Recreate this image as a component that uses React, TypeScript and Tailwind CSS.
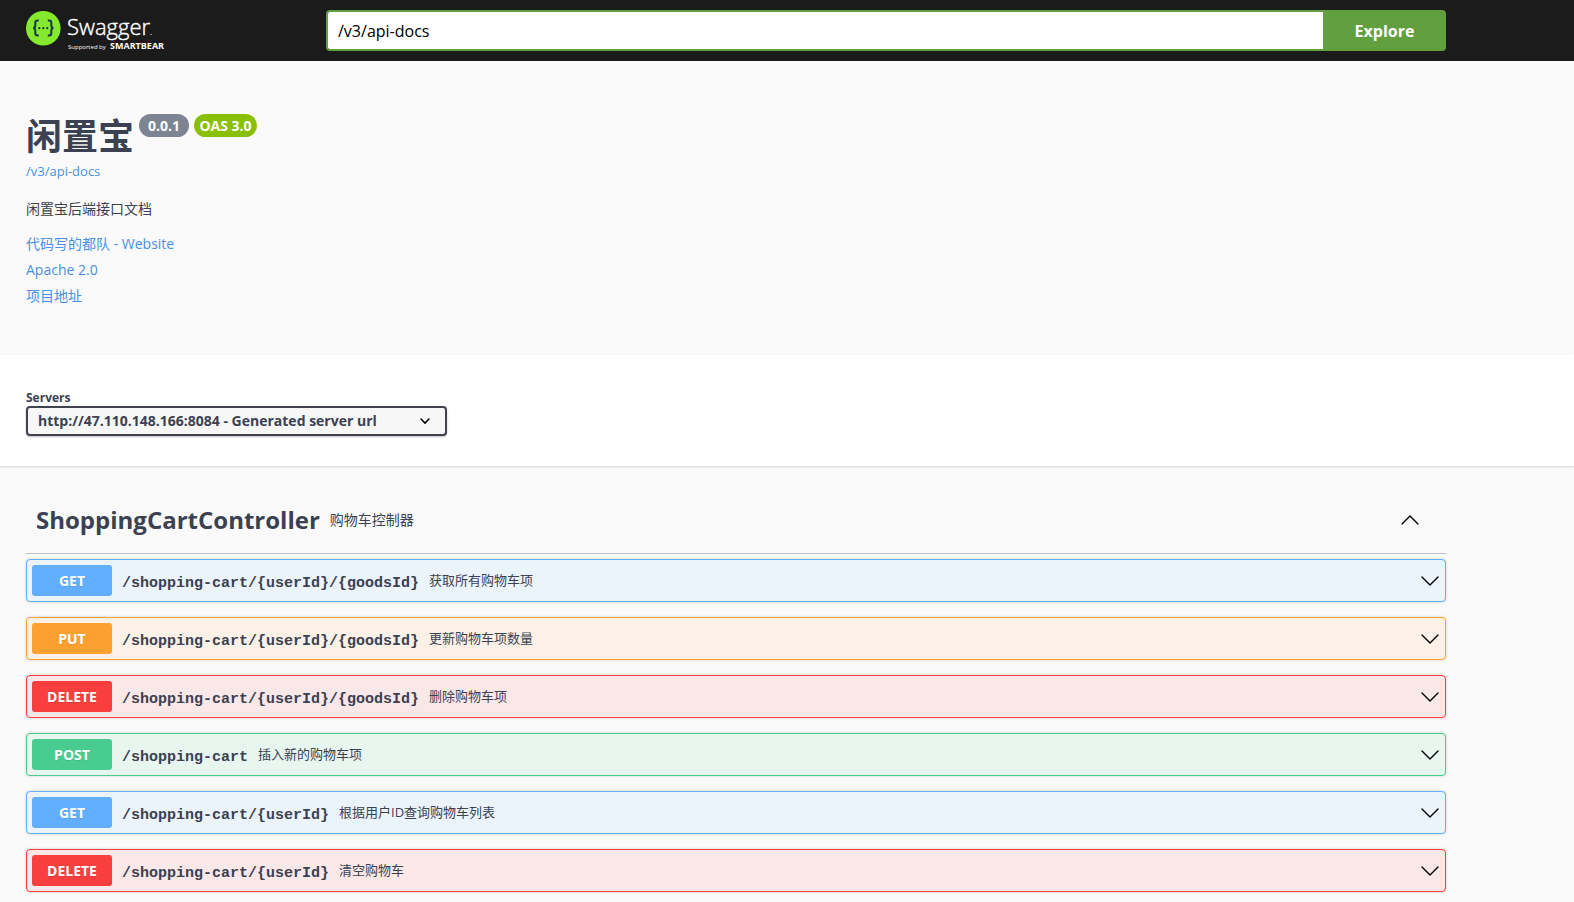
import { useState } from "react";

type Method = "GET" | "PUT" | "DELETE" | "POST";

const rowStyles: Record<Method, string> = {
  GET: "border-[#61affe] bg-[#ebf3fb]",
  PUT: "border-[#fca130] bg-[#fbf1e6]",
  DELETE: "border-[#f93e3e] bg-[#fae7e7]",
  POST: "border-[#49cc90] bg-[#e8f6f0]",
};

const badgeStyles: Record<Method, string> = {
  GET: "bg-[#61affe]",
  PUT: "bg-[#fca130]",
  DELETE: "bg-[#f93e3e]",
  POST: "bg-[#49cc90]",
};

const operations: { method: Method; path: string; summary: string }[] = [
  { method: "GET", path: "/shopping-cart/{userId}/{goodsId}", summary: "获取所有购物车项" },
  { method: "PUT", path: "/shopping-cart/{userId}/{goodsId}", summary: "更新购物车项数量" },
  { method: "DELETE", path: "/shopping-cart/{userId}/{goodsId}", summary: "删除购物车项" },
  { method: "POST", path: "/shopping-cart", summary: "插入新的购物车项" },
  { method: "GET", path: "/shopping-cart/{userId}", summary: "根据用户ID查询购物车列表" },
  { method: "DELETE", path: "/shopping-cart/{userId}", summary: "清空购物车" },
];

function Logo() {
  return (
    <svg width="144" height="41" viewBox="0 0 144 41" role="img" aria-label="Swagger">
      <circle cx="17.3" cy="18.3" r="17.3" fill="#85ea2d" />
      <g fill="none" stroke="#173647" strokeWidth="2">
        <path d="M12.8 10.5h-1.2c-1.6 0-2.3.8-2.3 2.3v2.4c0 1.8-.6 2.8-2.2 2.8 1.6 0 2.2 1 2.2 2.8v2.4c0 1.5.7 2.3 2.3 2.3h1.2" />
        <path d="M21.8 10.5h1.2c1.6 0 2.3.8 2.3 2.3v2.4c0 1.8.6 2.8 2.2 2.8-1.6 0-2.2 1-2.2 2.8v2.4c0 1.5-.7 2.3-2.3 2.3h-1.2" />
      </g>
      <g fill="#173647">
        <circle cx="13.3" cy="18.2" r="1.1" />
        <circle cx="17.3" cy="18.2" r="1.1" />
        <circle cx="21.3" cy="18.2" r="1.1" />
      </g>
      <text x="41" y="25" fill="#fff" stroke="#fff" strokeWidth="0.4" className="font-['Open_Sans'] text-[22px] font-light">
        Swagger
      </text>
      <circle cx="125" cy="24.5" r="0.6" fill="#fff" />
      <text x="42" y="39" fill="#fff" className="font-['Open_Sans'] text-[6px]">Supported by</text>
      <text x="84" y="39" fill="#fff" className="font-['Open_Sans'] text-[9px] font-bold">SMARTBEAR</text>
    </svg>
  );
}

function Chevron({ up = false }: { up?: boolean }) {
  return (
    <svg width="20" height="20" viewBox="0 0 20 20" fill="none" stroke="#000" strokeWidth="1.4" strokeLinecap="round" strokeLinejoin="round">
      <path d={up ? "M2 14l8-8 8 8" : "M2 6l8 8 8-8"} />
    </svg>
  );
}

function Operation({ method, path, summary }: { method: Method; path: string; summary: string }) {
  return (
    <button
      type="button"
      className={`flex w-full items-center rounded border p-[5px] text-left shadow-[0_0_3px_rgba(0,0,0,0.19)] ${rowStyles[method]}`}
    >
      <span
        className={`w-20 rounded-[3px] text-center text-sm leading-[31px] font-bold text-white [text-shadow:0_1px_0_rgba(0,0,0,0.1)] ${badgeStyles[method]}`}
      >
        {method}
      </span>
      <span className="px-[10px] pt-[6px] font-['Liberation_Mono',monospace] text-[15px] leading-5 font-bold">{path}</span>
      <span className="flex-1 text-[13px]">{summary}</span>
      <Chevron />
    </button>
  );
}

export default function App() {
  const [url, setUrl] = useState("/v3/api-docs");
  const [open, setOpen] = useState(true);

  return (
    <div className="min-h-screen bg-[#fafafa] font-['Open_Sans','Noto_Sans_CJK_SC',sans-serif] text-[#3b4151]">
      <header className="bg-[#1b1b1b] py-[10px] pr-32 pl-[26px]">
        <form className="flex items-center" onSubmit={(e) => e.preventDefault()}>
          <a href="#" className="w-[300px]">
            <Logo />
          </a>
          <input
            type="text"
            aria-label="API definition url"
            value={url}
            onChange={(e) => setUrl(e.target.value)}
            className="h-[41px] min-w-0 flex-1 rounded-l border-2 border-r-0 border-[#62a03f] bg-white px-[10px] text-base text-black outline-none"
          />
          <button type="submit" className="h-[41px] w-[123px] rounded-r bg-[#62a03f] text-base font-bold text-white">
            Explore
          </button>
        </form>
      </header>

      <main>
        <section className="pt-[50px] pr-32 pb-[46px] pl-[26px]">
          <div className="flex items-start gap-[5px]">
            <h1 className="text-4xl leading-[52px] font-bold">闲置宝</h1>
            <span className="mt-[3px] w-[50px] rounded-full bg-[#7d8492] text-center text-sm leading-[23px] font-bold text-white">0.0.1</span>
            <span className="mt-[3px] w-[63px] rounded-full bg-[#89bf04] text-center text-sm leading-[23px] font-bold text-white">OAS 3.0</span>
          </div>
          <a href="#" className="block text-[13px] leading-4 text-[#4990e2]">/v3/api-docs</a>
          <p className="mt-5 text-sm leading-5">闲置宝后端接口文档</p>
          <div className="mt-3 flex flex-col items-start text-sm leading-[26px] text-[#4990e2]">
            <a href="#">代码写的都队 - Website</a>
            <a href="#">Apache 2.0</a>
            <a href="#">项目地址</a>
          </div>
        </section>

        <section className="bg-white pt-[34px] pr-32 pb-[30px] pl-[26px] shadow-[0_1px_2px_rgba(0,0,0,0.15)]">
          <label htmlFor="servers" className="block text-xs leading-[17px] font-bold">Servers</label>
          <div className="relative w-[421px]">
            <select
              id="servers"
              className="block h-[30px] w-full appearance-none rounded border-2 border-[#41444e] bg-[#f7f7f7] pr-10 pl-[10px] text-sm font-bold shadow-[0_1px_2px_rgba(0,0,0,0.25)]"
            >
              <option>http://47.110.148.166:8084 - Generated server url</option>
            </select>
            <svg
              className="pointer-events-none absolute top-[5px] right-3 h-5 w-5"
              viewBox="0 0 20 20"
              fill="none"
              stroke="#000"
              strokeWidth="1.6"
              strokeLinecap="round"
            >
              <path d="M6 8l4 4 4-4" />
            </svg>
          </div>
        </section>

        <section className="pt-[30px] pr-32 pb-3 pl-[26px]">
          <button
            type="button"
            aria-expanded={open}
            onClick={() => setOpen(!open)}
            className="flex h-[58px] w-full items-center gap-[10px] border-b border-[#3b4151]/30 pr-[26px] pb-[10px] pl-[10px] text-left"
          >
            <h2 className="text-2xl font-bold">ShoppingCartController</h2>
            <span className="flex-1 text-sm">购物车控制器</span>
            <Chevron up={open} />
          </button>
          {open && (
            <div className="mt-[5px] flex flex-col gap-[15px]">
              {operations.map((op) => (
                <Operation key={op.method + op.path} {...op} />
              ))}
            </div>
          )}
        </section>
      </main>
    </div>
  );
}
